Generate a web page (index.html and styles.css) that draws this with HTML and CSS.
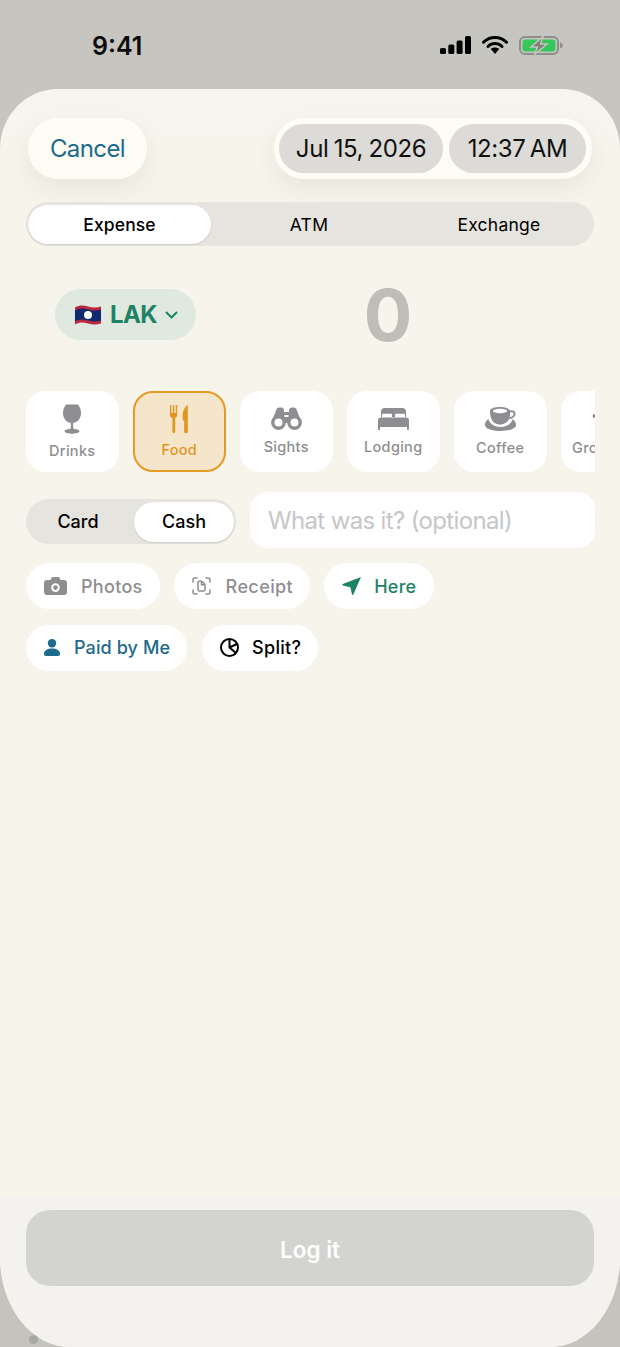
FILE: index.html
```html
<!DOCTYPE html>
<html lang="en">
<head>
<meta charset="utf-8">
<title>Log expense</title>
<link rel="stylesheet" href="styles.css">
</head>
<body>
<div class="status">
  <span class="clock">9:41</span>
  <div class="status-icons">
    <svg width="31" height="18" viewBox="0 0 31 18"><rect x="0" y="12" width="6" height="6" rx="1.5"/><rect x="8.3" y="8.5" width="6" height="9.5" rx="1.5"/><rect x="16.6" y="4.5" width="6" height="13.5" rx="1.5"/><rect x="25" y="0" width="6" height="18" rx="1.5"/></svg>
    <svg class="wifi" width="26" height="18" viewBox="0 0 26 18"><path d="M1.5 6.200C4.500 3.200 8.500 1.500 13 1.500s8.500 1.700 11.500 4.700" fill="none" stroke="#000" stroke-width="3" stroke-linecap="round"/><path d="M6 10.500c1.900-1.800 4.300-2.900 7-2.900s5.100 1.100 7 2.900" fill="none" stroke="#000" stroke-width="3" stroke-linecap="round"/><path d="M8.800 13c1.100-1 2.600-1.500 4.200-1.500s3.100.5 4.200 1.500L13 18z"/></svg>
    <svg class="batt" width="44" height="19" viewBox="0 0 44 19"><rect x="1" y="1" width="38" height="17" rx="5" fill="none" stroke="#8f8e8a" stroke-width="2"/><rect x="3.500" y="3.500" width="33" height="12" rx="3" fill="#35c759"/><path d="M41 6.500c2 .5 2.800 1.500 2.800 3s-.8 2.500-2.800 3z" fill="#8f8e8a"/><path d="M24 0.500 12 11h6.500L15.500 18.500 28 8h-6.500z" fill="#7f7e7a" stroke="#c6c5c0" stroke-width="1.500"/></svg>
  </div>
</div>

<main class="sheet">
  <header class="top">
    <button class="cancel">Cancel</button>
    <div class="when">
      <span class="when-pill date">Jul 15, 2026</span>
      <span class="when-pill time">12:37 AM</span>
    </div>
  </header>

  <div class="seg">
    <span class="seg-item active">Expense</span>
    <span class="seg-item">ATM</span>
    <span class="seg-item">Exchange</span>
  </div>

  <div class="amount-row">
    <div class="currency">
      <svg width="26" height="20" viewBox="0 0 26 20"><path d="M0 2.500C5-.5 9 .5 13 1.500s8 1.500 13 0v17c-5 1.500-9 1-13 0s-8-2-13 1z" fill="#c0273d"/><path d="M0 5.500C5 2.500 9 3.500 13 4.500s8 1.500 13 0v11c-5 1.500-9 1-13 0s-8-2-13 1z" fill="#10296f"/><circle cx="13" cy="10" r="4" fill="#fff"/></svg>
      <span class="code">LAK</span>
      <svg width="13" height="8" viewBox="0 0 13 8"><path d="M1.500 1.500 6.500 6.500 11.500 1.500" fill="none" stroke="#1d8266" stroke-width="2" stroke-linecap="round" stroke-linejoin="round"/></svg>
    </div>
    <div class="amount">0</div>
  </div>

  <div class="cats">
    <div class="cat">
      <svg width="18" height="30" viewBox="0 0 18 30"><path d="M3 .5h12c2 2.500 3 5.500 3 8.500 0 6-4 10-9 10S0 15 0 9C0 6 1 3 3 .5z"/><rect x="7.800" y="18" width="2.400" height="9"/><ellipse cx="9" cy="27.200" rx="7.500" ry="2.500"/></svg>
      <span>Drinks</span>
    </div>
    <div class="cat selected">
      <svg width="18" height="28" viewBox="0 0 18 28"><path d="M0 0h1.400v8h1.500V0h1.400v8h1.500V0h1.400v10c0 1.500-.9 2.600-2 3.100v14c0 .5-.4.900-.9.900H3.300c-.5 0-.9-.4-.9-.9v-14C.9 12.600 0 11.500 0 10z"/><path d="M17.800 0c-3.200 2-5.200 6-5.200 12 0 2 .5 3.800 1.600 4.500v10.600c0 .5.400.9.900.900h1.800c.5 0 .9-.4.900-.9z"/></svg>
      <span>Food</span>
    </div>
    <div class="cat">
      <svg width="31" height="23" viewBox="0 0 31 23"><path d="M1.500 13 5 3.500C5.500 1.500 6.500.5 8.500.5H10c2 0 3 1 3 3V5h5V3.500c0-2 1-3 3-3h1.500c2 0 3 1 3.500 3L29.500 13l-5-2.500h-18z"/><rect x="12" y="5" width="7" height="11"/><rect x="13.500" y="8" width="4" height="2" fill="#fff"/><circle cx="7.500" cy="15.500" r="5.700" fill="#fff" stroke="#8e8e92" stroke-width="3.400"/><circle cx="23.500" cy="15.500" r="5.700" fill="#fff" stroke="#8e8e92" stroke-width="3.400"/></svg>
      <span>Sights</span>
    </div>
    <div class="cat">
      <svg width="31" height="22" viewBox="0 0 31 22"><path fill-rule="evenodd" d="M3 3.500C3 1.500 4.500 0 6.500 0h18C26.500 0 28 1.500 28 3.500V9h-1V7c0-.8-.5-1.300-1.300-1.300h-7.400C17.500 5.700 17 6.200 17 7v2h-3V7c0-.8-.5-1.300-1.300-1.300H5.300C4.500 5.700 4 6.200 4 7v2H3z"/><path d="M3 9.500h25c2 0 3 1.300 3 3V21c0 .6-.4 1-1 1s-1-.4-1-1v-2H2v2c0 .6-.4 1-1 1s-1-.4-1-1v-8.500c0-1.700 1-3 3-3z"/></svg>
      <span>Lodging</span>
    </div>
    <div class="cat">
      <svg width="31" height="24" viewBox="0 0 31 24"><path d="M3.500 12C1 13.500 0 15.500 0 18c0 3.500 6.500 6 15.500 6S31 21.500 31 18c0-2.500-1-4.500-3.500-6-.5 4-5.500 8-12 8S4 16 3.500 12z"/><path fill-rule="evenodd" d="M5 4c0-2.500 4.500-4 10-4 5 0 9 1.300 10 3.500 3.500-.8 5.500 1 5.500 3.200 0 2.800-2.700 4.800-6.500 5.300-1.300 3-4.600 5.500-9 5.500-6 0-10-4.500-10-13.500zM15 1.800c-4 0-7 1-7 2.200s3 2.200 7 2.200 7-1 7-2.200-3-2.200-7-2.200zm10.200 3.600c0 1.800-.2 3.500-.6 4.900 2.500-.5 4-1.900 4-3.600 0-1.300-1.300-1.800-3.400-1.300z"/></svg>
      <span>Coffee</span>
    </div>
    <div class="cat">
      <svg width="31" height="24" viewBox="0 0 31 24"><circle cx="2.500" cy="9" r="2"/><path d="M7 12h21l-3 12H10z"/></svg>
      <span>Groceries</span>
    </div>
  </div>

  <div class="pay-row">
    <div class="pay">
      <span class="pay-item">Card</span>
      <span class="pay-item active">Cash</span>
    </div>
    <input class="note" type="text" placeholder="What was it? (optional)">
  </div>

  <div class="chips first">
    <span class="chip grey"><svg width="23" height="18" viewBox="0 0 23 18"><path fill-rule="evenodd" d="M3 3h3.500l1-2.200C7.800.3 8.200 0 8.800 0h5.400c.6 0 1 .3 1.300.8l1 2.200H20c1.700 0 3 1.300 3 3v9c0 1.700-1.300 3-3 3H3c-1.700 0-3-1.300-3-3V6c0-1.700 1.300-3 3-3zm8.500 3.300a4.300 4.300 0 1 0 0 8.600 4.300 4.300 0 0 0 0-8.600zm0 1.900a2.400 2.400 0 1 1 0 4.800 2.400 2.400 0 0 1 0-4.800z"/></svg>Photos</span>
    <span class="chip grey receipt"><svg width="19" height="18" viewBox="0 0 19 18"><g fill="none" stroke="#8e8e90" stroke-width="1.500" stroke-linecap="round"><path d="M1 5V3c0-1.200.8-2 2-2h2M14 1h2c1.200 0 2 .8 2 2v2M18 13v2c0 1.200-.8 2-2 2h-2M5 17H3c-1.200 0-2-.8-2-2v-2"/><path d="M6 5.500c0-.8.500-1.300 1.300-1.300h2.500L13 7.300v5.400c0 .8-.5 1.300-1.300 1.300H7.300C6.500 14 6 13.500 6 12.700zM9.500 4.500v3.200H13"/></g></svg>Receipt</span>
    <span class="chip green"><svg width="19" height="18" viewBox="0 0 19 18"><path d="M19 0 11.500 17.300c-.3.800-1.300.8-1.500-.1L8.300 10.300 1 8.400C.1 8.200 0 7.200.9 6.900z"/></svg>Here</span>
  </div>

  <div class="chips second">
    <span class="chip blue"><svg width="16" height="17" viewBox="0 0 16 17"><circle cx="8" cy="4.200" r="4.200"/><path d="M8 9.500c4.500 0 8 2 8 5.300 0 1.400-.8 2.200-2 2.200H2c-1.200 0-2-.8-2-2.200C0 11.500 3.500 9.500 8 9.500z"/></svg>Paid by Me</span>
    <span class="chip black"><svg width="19" height="19" viewBox="0 0 19 19"><g fill="none" stroke="#000" stroke-width="2"><circle cx="9.500" cy="9.500" r="8.500"/><path d="M9.500 1v8.500l6.500 5.500M9.500 9.500 17 6"/></g></svg>Split?</span>
  </div>

  <footer class="foot">
    <button class="log">Log it</button>
  </footer>
</main>
<i class="speck"></i>
</body>
</html>
```

FILE: styles.css
```css
* { box-sizing: border-box; }
html, body { margin: 0; height: 1347px; overflow: hidden; }
body {
  background: linear-gradient(#c6c5c0, #c4c4bc);
  font-family: Inter, "Liberation Sans", sans-serif;
  color: #000;
  position: relative;
}
button { font: inherit; border: 0; padding: 0; }

.status {
  height: 89px;
  display: flex;
  justify-content: space-between;
  padding: 32px 57px 0 92px;
}
.clock { font-size: 25px; font-weight: 600; line-height: 28px; color: #0c0c0c; }
.status-icons { display: flex; gap: 11px; align-items: flex-start; padding-top: 4px; }
.status-icons svg { display: block; fill: #000; }

.sheet {
  height: 1258px;
  border-radius: 58px 58px 70px 70px / 60px 60px 90px 90px;
  background: linear-gradient(#f6f5ee, #f7f4ec 60px);
  display: flex;
  flex-direction: column;
  padding-top: 29px;
  overflow: hidden;
}

.top { display: flex; justify-content: space-between; padding: 0 28px; height: 61px; }
.cancel {
  width: 119px;
  border-radius: 30px;
  background: #fdfcf5;
  color: #1d6a8c;
  font-size: 24px;
  letter-spacing: -.6px;
  box-shadow: 0 10px 24px rgba(60, 55, 40, .07);
}
.when {
  width: 318px;
  border-radius: 30px;
  background: #fdfcf5;
  display: flex;
  gap: 6px;
  padding: 6px 5px;
  box-shadow: 0 10px 24px rgba(60, 55, 40, .07);
}
.when-pill {
  display: flex;
  align-items: center;
  justify-content: center;
  border-radius: 25px;
  background: #dcdbd7;
  font-size: 24px;
  letter-spacing: -.4px;
  word-spacing: -1px;
  height: 49px;
  color: #111;
}
.date { width: 164px; }
.time { width: 137px; word-spacing: -2px; }

.seg {
  margin: 23px 26px 0;
  height: 44px;
  border-radius: 22px;
  background: #e5e4df;
  display: flex;
  align-items: center;
  padding: 0 0 0 2px;
}
.seg-item { flex: 1; text-align: center; font-size: 17.5px; font-weight: 400; letter-spacing: .25px; }
.seg-item.active {
  flex: none;
  width: 183px;
  height: 39px;
  line-height: 39px;
  margin-right: 3px;
  border-radius: 20px;
  background: #fff;
  box-shadow: 0 1px 2px rgba(0, 0, 0, .1);
  font-weight: 500;
  letter-spacing: .1px;
}

.amount-row { margin-top: 43px; height: 51px; display: flex; align-items: center; padding: 0 40px 0 55px; }
.currency {
  width: 141px;
  height: 51px;
  border-radius: 26px;
  background: #dfe9df;
  display: flex;
  align-items: center;
  padding-left: 20px;
  color: #1d8266;
}
.code { font-size: 24px; font-weight: 700; letter-spacing: -.6px; margin: 0 8px 0 9px; }
.amount { flex: 1; text-align: center; font-size: 72px; font-weight: 700; line-height: 51px; color: #bebdb7; }

.cats {
  margin: 51px 25px 0 26px;
  height: 81px;
  display: flex;
  gap: 14.5px;
  overflow: hidden;
}
.cat {
  flex: none;
  width: 92.5px;
  height: 81px;
  border-radius: 20px;
  background: #fff;
  display: flex;
  flex-direction: column;
  align-items: center;
  justify-content: center;
  gap: 8px;
  font-size: 14.5px;
  letter-spacing: .3px;
  font-weight: 500;
  color: #8e8e90;
  line-height: 18px;
}
.cat svg { display: block; fill: #8e8e92; }
.cat.selected { background: #f5e6cb; border: 2px solid #e59a22; color: #e2951f; }
.cat.selected svg { fill: #e2951f; }

.pay-row { margin: 20px 25px 0 26px; height: 56px; display: flex; align-items: center; gap: 14px; }
.pay {
  width: 210px;
  height: 45px;
  margin-top: 3px;
  border-radius: 23px;
  background: #e5e4df;
  display: flex;
  align-items: center;
  padding: 0 2px 0 0;
  font-size: 18px;
  font-weight: 500;
  flex: none;
}
.pay-item { flex: 1; text-align: center; padding-right: 4px; }
.pay-item.active {
  flex: none;
  width: 100px;
  height: 40px;
  line-height: 40px;
  padding: 0;
  border-radius: 20px;
  background: #fff;
  box-shadow: 0 1px 2px rgba(0, 0, 0, .12);
}
.note {
  flex: 1;
  min-width: 0;
  height: 56px;
  border: 0;
  border-radius: 18px;
  background: #fff;
  padding: 0 18px;
  font: 24px Inter, "Liberation Sans", sans-serif;
  letter-spacing: -.65px;
  outline: none;
}
.note::placeholder { color: #c6c6c8; opacity: 1; }

.chips { display: flex; gap: 14px; margin: 0 0 0 26px; }
.chips.first { margin-top: 15px; }
.chips.second { margin-top: 16px; gap: 15px; }
.chip {
  height: 46px;
  border-radius: 23px;
  background: #fff;
  display: flex;
  align-items: center;
  gap: 14px;
  padding: 0 17px 0 18px;
  font-size: 18px;
  font-weight: 500;
  letter-spacing: .3px;
}
.chips.second .chip { padding-bottom: 1px; }
.chip svg { display: block; flex: none; }
.grey { color: #8e8e90; fill: #8e8e90; }
.receipt { gap: 15px; letter-spacing: .4px; }
.green { color: #1d8266; fill: #1d8266; gap: 13px; }
.blue { color: #1d6a8c; fill: #1d6a8c; letter-spacing: .1px; }
.black { color: #000; gap: 13px; }

.foot {
  margin-top: auto;
  height: 150px;
  background: #f3f2ee;
  padding: 13px 26px 0;
}
.log {
  display: block;
  width: 100%;
  height: 76px;
  padding-top: 2px;
  border-radius: 24px;
  background: #d3d3d0;
  color: #fff;
  font-size: 22.5px;
  font-weight: 600;
}

.speck {
  position: absolute;
  left: 29px;
  top: 1335px;
  width: 9px;
  height: 9px;
  border-radius: 50%;
  background: #a9a9a3;
}
```
